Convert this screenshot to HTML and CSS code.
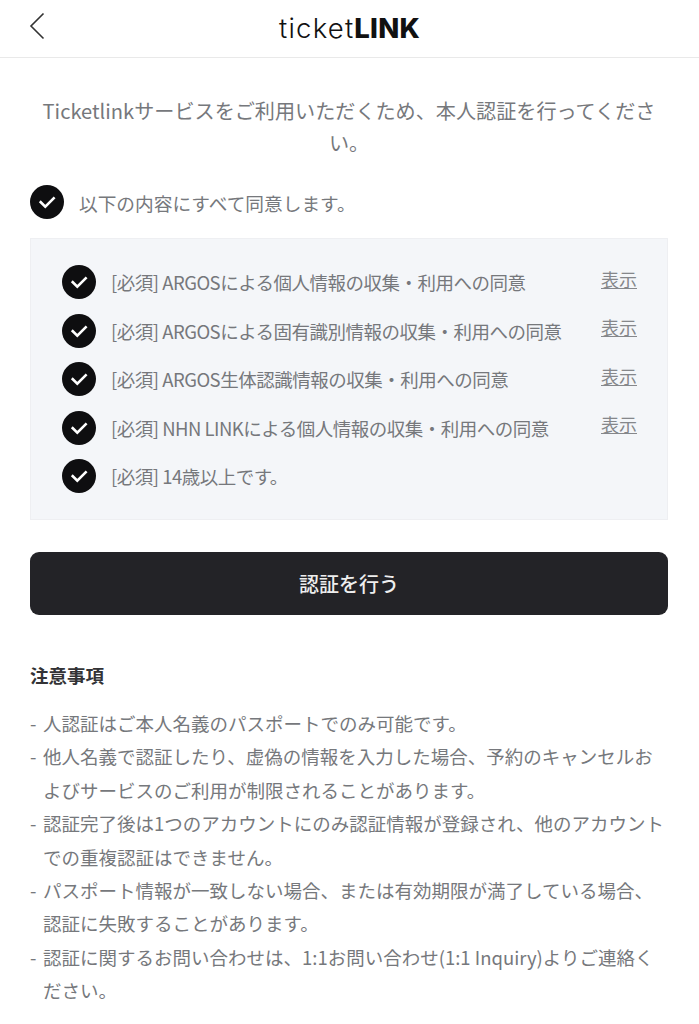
FILE: index.html
```html
<!DOCTYPE html>
<html lang="ja">
<head>
<meta charset="utf-8">
<title>ticketLINK</title>
<link rel="stylesheet" href="styles.css">
</head>
<body>
<header class="top">
  <svg class="back" width="16" height="28" viewBox="0 0 16 28"><path d="M14.5 1.5 L2 14 L14.5 26.5" fill="none" stroke="#333" stroke-width="1.6"/></svg>
  <div class="logo"><span class="logo-a">ticket</span><span class="logo-b">LINK</span></div>
</header>
<main class="page">
  <p class="intro">Ticketlinkサービスをご利用いただくため、本人認証を行ってください。</p>
  <div class="all">
    <svg class="check" viewBox="0 0 34 34"><circle cx="17" cy="17" r="17" fill="#0e0e10"/><path d="M9.8 16.2 L15.3 21.6 L24.6 12.4" fill="none" stroke="#fff" stroke-width="2.6"/></svg>
    <span>以下の内容にすべて同意します。</span>
  </div>
  <ul class="terms">
    <li class="term"><svg class="check" viewBox="0 0 34 34"><circle cx="17" cy="17" r="17" fill="#0e0e10"/><path d="M9.8 16.2 L15.3 21.6 L24.6 12.4" fill="none" stroke="#fff" stroke-width="2.6"/></svg><span class="label">[必須] ARGOSによる個人情報の収集・利用への同意</span><a class="show">表示</a></li>
    <li class="term"><svg class="check" viewBox="0 0 34 34"><circle cx="17" cy="17" r="17" fill="#0e0e10"/><path d="M9.8 16.2 L15.3 21.6 L24.6 12.4" fill="none" stroke="#fff" stroke-width="2.6"/></svg><span class="label">[必須] ARGOSによる固有識別情報の収集・利用への同意</span><a class="show">表示</a></li>
    <li class="term"><svg class="check" viewBox="0 0 34 34"><circle cx="17" cy="17" r="17" fill="#0e0e10"/><path d="M9.8 16.2 L15.3 21.6 L24.6 12.4" fill="none" stroke="#fff" stroke-width="2.6"/></svg><span class="label">[必須] ARGOS生体認識情報の収集・利用への同意</span><a class="show">表示</a></li>
    <li class="term"><svg class="check" viewBox="0 0 34 34"><circle cx="17" cy="17" r="17" fill="#0e0e10"/><path d="M9.8 16.2 L15.3 21.6 L24.6 12.4" fill="none" stroke="#fff" stroke-width="2.6"/></svg><span class="label">[必須] NHN LINKによる個人情報の収集・利用への同意</span><a class="show">表示</a></li>
    <li class="term"><svg class="check" viewBox="0 0 34 34"><circle cx="17" cy="17" r="17" fill="#0e0e10"/><path d="M9.8 16.2 L15.3 21.6 L24.6 12.4" fill="none" stroke="#fff" stroke-width="2.6"/></svg><span class="label">[必須] 14歳以上です。</span></li>
  </ul>
  <button class="submit">認証を行う</button>
  <h2 class="notes-title">注意事項</h2>
  <ul class="notes">
    <li>人認証はご本人名義のパスポートでのみ可能です。</li>
    <li>他人名義で認証したり、虚偽の情報を入力した場合、予約のキャンセルおよびサービスのご利用が制限されることがあります。</li>
    <li>認証完了後は1つのアカウントにのみ認証情報が登録され、他のアカウントでの重複認証はできません。</li>
    <li>パスポート情報が一致しない場合、または有効期限が満了している場合、認証に失敗することがあります。</li>
    <li>認証に関するお問い合わせは、1:1お問い合わせ(1:1 Inquiry)よりご連絡ください。</li>
  </ul>
</main>
</body>
</html>
```

FILE: styles.css
```css
* { box-sizing: border-box; }
html, body { margin: 0; padding: 0; background: #fff; }
body { font-family: "Noto Sans CJK JP", "Noto Sans", sans-serif; color: #76787c; overflow: hidden; }
.top { height: 58px; border-bottom: 1px solid #e9e9e9; display: flex; align-items: center; justify-content: center; position: relative; }
.back { position: absolute; left: 29px; top: 12px; }
.logo { font-family: "Inter", sans-serif; font-size: 27.5px; color: #111; padding-bottom: 2px; }
.logo-a { font-weight: 300; letter-spacing: 1.2px; }
.logo-b { font-weight: 800; letter-spacing: 0.2px; }
.page { padding: 0 31px 0 30px; }
.intro { margin: 37px 0 0; font-size: 20.13px; line-height: 32px; text-align: center; }
.all { display: flex; align-items: center; gap: 15px; margin-top: 26px; font-size: 18.7px; height: 34px; }
.check { width: 34px; height: 34px; flex: none; }
.terms { list-style: none; margin: 19px 0 0; padding: 19px 30px 17px 31px; height: 282px; background: #f4f6f9; border: 1px solid #eeeff2; }
.term { display: flex; align-items: center; height: 48.5px; font-size: 18.5px; letter-spacing: -0.5px; }
.label { margin-left: 15px; flex: 1; }
.show { font-size: 18px; color: #85878b; text-decoration: underline; letter-spacing: 0; margin-top: -7px; }
.submit { display: block; width: 100%; height: 63px; margin-top: 32px; border: 0; border-radius: 9px; background: #232327; color: #eeeeee; font: 500 20px "Noto Sans CJK JP", sans-serif; }
.notes-title { margin: 45px 0 0; font-size: 18.5px; line-height: 30px; font-weight: 700; color: #333336; }
.notes { list-style: none; margin: 17px 0 0; padding: 0; font-size: 18.5px; line-height: 33.4px; }
.notes li { position: relative; padding-left: 13px; }
.notes li::before { content: "-"; position: absolute; left: 0; }
```
